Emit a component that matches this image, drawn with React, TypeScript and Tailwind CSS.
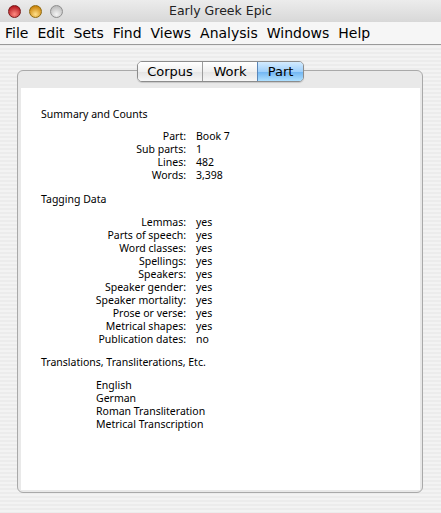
import React from "react";

const font = { fontFamily: '"DejaVu Sans", "Liberation Sans", sans-serif' };
const bodyFont = { fontFamily: '"Noto Sans", "DejaVu Sans", sans-serif' };

function Light({ from, to, border }: { from: string; to: string; border: string }) {
  return (
    <div
      className="w-[13px] h-[13px] rounded-full border"
      style={{ background: `radial-gradient(circle at 50% 75%, ${to} 0%, ${from} 85%)`, borderColor: border }}
    />
  );
}

function Row({ label, value }: { label: string; value: string }) {
  return (
    <div className="flex h-[13px] leading-[13px]">
      <div className="w-[145px] text-right">{label}</div>
      <div className="ml-[10px]">{value}</div>
    </div>
  );
}

export default function App() {
  const menus = ["File", "Edit", "Sets", "Find", "Views", "Analysis", "Windows", "Help"];
  return (
    <div
      className="w-[441px] h-[513px] flex flex-col text-black overflow-hidden bg-[repeating-linear-gradient(180deg,#ececec_0px,#ececec_2px,#f3f3f3_2px,#f3f3f3_4px)]"
      style={font}
    >
      {/* title bar */}
      <div className="relative h-[22px] flex items-center bg-[linear-gradient(180deg,#ececec,#d8d8d8)]">
        <div className="flex gap-[8px] pl-[8px] items-center">
          <Light from="#b0121a" to="#ff8a80" border="#7a1a1a" />
          <Light from="#c77d00" to="#ffe08a" border="#8f6a10" />
          <Light from="#b8b8b8" to="#f4f4f4" border="#8e8e8e" />
        </div>
        <div className="absolute inset-0 flex items-center justify-center text-[12.5px] text-[#222]">
          Early Greek Epic
        </div>
      </div>
      {/* menu bar */}
      <div className="h-[23px] flex items-center pl-[5px] gap-[9px] text-[14px] bg-[#f6f6f6] border-b border-[#9a9a9a]">
        {menus.map((m) => (
          <span key={m}>{m}</span>
        ))}
      </div>
      {/* content */}
      <div className="pl-[17px] pt-[25px]">
        <div className="relative w-[406px] h-[423px] rounded-[6px] border border-[#a9a9a9] bg-[#e9e9e9] pt-[17px] pl-[3px] pr-[2px] pb-[2px] flex flex-col">
          <div className="absolute left-[119px] -top-[10px] flex h-[21px] text-[13px] rounded-[5px] border border-[#8c8c8c] overflow-hidden shadow-[0_1px_1px_rgba(0,0,0,0.15)]">
            <div className="w-[65px] flex items-center justify-center bg-[linear-gradient(180deg,#ffffff,#f0f0f0_50%,#e4e4e4_51%,#f6f6f6)] border-r border-[#9c9c9c]">
              Corpus
            </div>
            <div className="w-[55px] flex items-center justify-center bg-[linear-gradient(180deg,#ffffff,#f0f0f0_50%,#e4e4e4_51%,#f6f6f6)] border-r border-[#5a86b8]">
              Work
            </div>
            <div className="w-[45px] flex items-center justify-center bg-[linear-gradient(180deg,#d3ebff,#9fd0fb_50%,#6fb4f2_51%,#aee0ff)]">
              Part
            </div>
          </div>
          <div className="flex-1 bg-white text-[10.5px] pl-[20px] pt-[20px] leading-[13px]" style={bodyFont}>
            <div className="h-[13px]">Summary and Counts</div>
            <div className="mt-[9px]">
              <Row label="Part:" value="Book 7" />
              <Row label="Sub parts:" value="1" />
              <Row label="Lines:" value="482" />
              <Row label="Words:" value="3,398" />
            </div>
            <div className="h-[13px] mt-[11px]">Tagging Data</div>
            <div className="mt-[10px]">
              <Row label="Lemmas:" value="yes" />
              <Row label="Parts of speech:" value="yes" />
              <Row label="Word classes:" value="yes" />
              <Row label="Spellings:" value="yes" />
              <Row label="Speakers:" value="yes" />
              <Row label="Speaker gender:" value="yes" />
              <Row label="Speaker mortality:" value="yes" />
              <Row label="Prose or verse:" value="yes" />
              <Row label="Metrical shapes:" value="yes" />
              <Row label="Publication dates:" value="no" />
            </div>
            <div className="h-[13px] mt-[10px]">Translations, Transliterations, Etc.</div>
            <div className="mt-[10px] pl-[55px]">
              <div className="h-[13px]">English</div>
              <div className="h-[13px]">German</div>
              <div className="h-[13px]">Roman Transliteration</div>
              <div className="h-[13px]">Metrical Transcription</div>
            </div>
          </div>
        </div>
      </div>
    </div>
  );
}
